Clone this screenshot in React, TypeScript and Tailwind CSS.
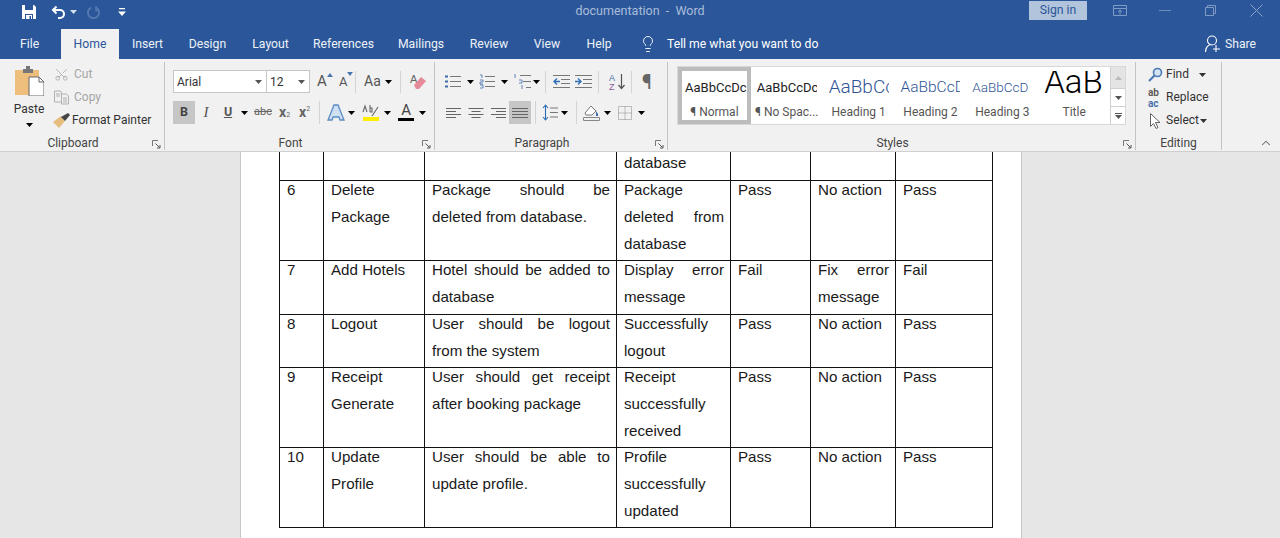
import type { ReactNode } from "react"
import { ChevronUp, Lightbulb, Scissors } from "lucide-react"

const tabs = [
  { name: "Insert", w: "w-[57px]" },
  { name: "Design", w: "w-[63px]" },
  { name: "Layout", w: "w-[63px]" },
  { name: "References", w: "w-[83px]" },
  { name: "Mailings", w: "w-[72px]" },
  { name: "Review", w: "w-[64px]" },
  { name: "View", w: "w-[52px]" },
  { name: "Help", w: "w-[52px]" },
]

const rows = [
  { no: "6", test: "Delete Package", expected: "Package should be deleted from database.", actual: "Package deleted from database", first: "Pass", action: "No action", last: "Pass", h: "h-[80px]" },
  { no: "7", test: "Add Hotels", expected: "Hotel should be added to database", actual: "Display error message", first: "Fail", action: "Fix error message", last: "Fail", h: "h-[54px]" },
  { no: "8", test: "Logout", expected: "User should be logout from the system", actual: "Successfully logout", first: "Pass", action: "No action", last: "Pass", h: "h-[53px]" },
  { no: "9", test: "Receipt Generate", expected: "User should get receipt after booking package", actual: "Receipt successfully received", first: "Pass", action: "No action", last: "Pass", h: "h-[80px]" },
  { no: "10", test: "Update Profile", expected: "User should be able to update profile.", actual: "Profile successfully updated", first: "Pass", action: "No action", last: "Pass", h: "h-[80px]" },
]

const styles = [
  { label: "¶ No Spac...", preview: "AaBbCcDc", cls: "text-[13px] text-[#222]" },
  { label: "Heading 1", preview: "AaBbCc", cls: "text-[19px] font-light text-[#2f5496]" },
  { label: "Heading 2", preview: "AaBbCcD", cls: "text-[15.500px] font-light text-[#2f5496]" },
  { label: "Heading 3", preview: "AaBbCcD", cls: "text-[13.500px] font-light text-[#2f5496]" },
]

function Caret({ className = "text-[#555]" }: { className?: string }) {
  return (
    <svg width="7" height="4" viewBox="0 0 7 4" className={className}>
      <path d="M0 0h7L3.5 4z" fill="currentColor" />
    </svg>
  )
}

function Launcher() {
  return (
    <svg width="9" height="9" viewBox="0 0 9 9" fill="none" stroke="#777">
      <path d="M.5 6V.5H6" />
      <path d="M3.5 3.5l4 4M8 5v3H5" stroke="#555" />
    </svg>
  )
}

function Lines({ kind }: { kind: "left" | "center" | "right" | "justify" }) {
  const ys = [1.5, 4.5, 7.5, 10.5]
  const short = { left: [15, 10, 15, 10], center: [15, 9, 15, 9], right: [15, 10, 15, 10], justify: [16, 16, 16, 16] }[kind]
  return (
    <svg width="16" height="12" viewBox="0 0 16 12" stroke="#666">
      {ys.map((y, i) => {
        const w = short[i]
        const x = kind === "left" ? 0 : kind === "center" ? (16 - w) / 2 : 16 - w
        return <path key={y} d={`M${x} ${y}h${w}`} />
      })}
    </svg>
  )
}

function Tool({ w, children, active }: { w: string; children: ReactNode; active?: boolean }) {
  return <div className={`flex h-[23px] items-center justify-center ${w} ${active ? "bg-[#c6c6c6]" : ""}`}>{children}</div>
}

function Group({ label, w, children, launcher = true }: { label: string; w: string; children: ReactNode; launcher?: boolean }) {
  return (
    <div className={`relative flex h-[88px] flex-col border-r border-[#c4c4c4] ${w}`}>
      <div className="min-h-0 flex-1">{children}</div>
      <div className={`flex h-[14px] items-center justify-center text-[12px] leading-none text-[#444] ${launcher ? "pr-[18px]" : ""}`}>{label}</div>
      {launcher && (
        <div className="absolute right-[3px] bottom-[1px] flex">
          <Launcher />
        </div>
      )}
    </div>
  )
}

function TitleBar() {
  return (
    <div className="grid h-[29px] grid-cols-[1fr_auto_1fr] items-start text-white">
      <div className="flex h-[24px] items-center pl-[21px]">
        <svg width="16" height="16" viewBox="0 0 16 16" fill="none">
          <path d="M1 1h12l2 2v12H1z" fill="white" />
          <path d="M4 1h8v5H4zM4 10h8v5H4z" fill="#2b579a" />
          <path d="M5 11h6v4H5z" fill="white" />
          <path d="M8.5 12h1.5v3H8.5z" fill="#2b579a" />
        </svg>
        <svg width="16" height="14" viewBox="0 0 16 14" fill="none" stroke="white" strokeWidth="2" className="ml-[14px]">
          <path d="M5.5 1.5L2 5l3.5 3.5" />
          <path d="M2.5 5h6.5a4 4 0 0 1 0 8H7" />
        </svg>
        <Caret className="ml-[3px] text-[#d5dfee]" />
        <svg width="15" height="15" viewBox="0 0 15 15" fill="none" stroke="#5377ae" strokeWidth="2" className="ml-[9px]">
          <path d="M5 2.600a5.600 5.600 0 1 0 5 0" />
          <path d="M10 1v4.500h3" strokeWidth="1.500" />
        </svg>
        <svg width="8" height="8" viewBox="0 0 8 8" className="ml-[17px]" fill="white">
          <path d="M1 0h6v1.300H1zM0 3.500h8L4 8z" />
        </svg>
      </div>
      <div className="pt-[2px] text-[12.500px] leading-[18px] whitespace-pre text-[#a9bcd9]">documentation  -  Word</div>
      <div className="flex h-[21px] items-center justify-end">
        <div className="flex h-[19px] w-[58px] items-center justify-center bg-[#b2c3dc] text-[12.200px] text-[#2b579a]">Sign in</div>
        <div className="ml-[26px] flex w-[14px] justify-center">
          <svg width="14" height="11" viewBox="0 0 14 11" fill="none" stroke="#7f9ac4">
            <path d="M.5.500h13v10H.5zM.5 3.500h13M7 9.500V5M5 7l2-2 2 2" />
          </svg>
        </div>
        <div className="ml-[32px] h-px w-[12px] bg-[#6e8dbb]" />
        <svg width="11" height="11" viewBox="0 0 11 11" fill="none" stroke="#7f9ac4" className="ml-[34px]">
          <path d="M.5 2.500h8v8h-8zM2.500 2.500v-2h8v8h-2" />
        </svg>
        <svg width="13" height="13" viewBox="0 0 13 13" fill="none" stroke="#8aa3c9" className="mr-[17px] ml-[34px]">
          <path d="M.5.500l12 12M12.500.500l-12 12" />
        </svg>
      </div>
    </div>
  )
}

function TabBar() {
  return (
    <div className="flex h-[30px] items-center text-[12.200px] text-[#eef2f8]">
      <div className="flex h-full w-[61px] items-center pl-[20px]">File</div>
      <div className="flex h-full w-[58px] items-center justify-center bg-[#f1f1f1] text-[#2b579a]">Home</div>
      {tabs.map((t) => (
        <div key={t.name} className={`flex h-full items-center justify-center ${t.w}`}>
          {t.name}
        </div>
      ))}
      <Lightbulb size={18} strokeWidth={1.200} className="ml-[14px] text-white" />
      <div className="ml-[10px] text-white">Tell me what you want to do</div>
      <div className="ml-auto mr-[24px] flex items-center">
        <svg width="16" height="18" viewBox="0 0 16 18" fill="none" stroke="white" strokeWidth="1.100">
          <circle cx="7" cy="5.500" r="4.500" />
          <path d="M.5 17c0-4 2.500-7 5-7.500M11 10v7M8 14h7" />
        </svg>
        <span className="ml-[4px]">Share</span>
      </div>
    </div>
  )
}

function Clipboard() {
  return (
    <Group label="Clipboard" w="w-[165px]">
      <div className="flex">
        <div className="flex w-[54px] flex-col items-center pt-[3px] pl-[4px]">
          <svg width="30" height="31" viewBox="0 0 30 31">
            <path d="M1 5h24v25H1z" fill="#eebf7c" />
            <path d="M9 4h3V1h4v3h3v4H9z" fill="#777" />
            <path d="M15 12h10l5 5v14H15z" fill="white" stroke="#666" />
            <path d="M25 12v5h5" fill="none" stroke="#666" />
          </svg>
          <div className="mt-[5px] text-[12px] leading-[16px] text-[#333]">Paste</div>
          <Caret className="mt-[6px]" />
        </div>
        <div className="flex flex-col pt-[1px] text-[12px] leading-[23px]">
          <div className="flex items-center text-[#a6a6a6]">
            <Scissors size={15} strokeWidth={1.300} className="-rotate-90" />
            <span className="ml-[5px]">Cut</span>
          </div>
          <div className="flex items-center text-[#a6a6a6]">
            <svg width="15" height="15" viewBox="0 0 15 15" fill="none" stroke="#b0b0b0">
              <path d="M.5 1h6l1 2v9H.5zM7.500 4h5l2 2v8h-7zM2 4h4M2 6h4M9 8h4M9 10h4M9 12h4" />
            </svg>
            <span className="ml-[5px]">Copy</span>
          </div>
          <div className="-ml-[1px] flex items-center text-[#333]">
            <svg width="17" height="15" viewBox="0 0 17 15">
              <path d="M0 9l8-6 4 5-6 7z" fill="#e6bd7e" />
              <path d="M8 4l7-4 2 2-5 6z" fill="#444" />
            </svg>
            <span className="ml-[2px]">Format Painter</span>
          </div>
        </div>
      </div>
    </Group>
  )
}

function Font() {
  return (
    <Group label="Font" w="w-[270px]">
      <div className="pl-[8px] pt-[8px]">
        <div className="flex h-[23px] items-center">
          <div className="flex h-[23px] w-[94px] items-center justify-between border border-[#c6c6c6] bg-white pt-[1px] pr-[4px] pl-[3px] text-[12px] text-[#333]">
            Arial
            <Caret />
          </div>
          <div className="flex h-[23px] w-[43px] items-center justify-between border border-l-0 border-[#c6c6c6] bg-white pt-[1px] pr-[4px] pl-[3px] text-[12px] text-[#333]">
            12
            <Caret />
          </div>
          <div className="relative ml-[7px] w-[16px] text-[15px] leading-none text-[#555]">
            A
            <svg width="6" height="4" viewBox="0 0 6 4" className="absolute -top-[1px] left-[10px] text-[#4a76b0]">
              <path d="M0 4l3-4 3 4z" fill="currentColor" />
            </svg>
          </div>
          <div className="relative ml-[6px] w-[14px] text-[13px] leading-none text-[#555]">
            A
            <svg width="6" height="4" viewBox="0 0 6 4" className="absolute -top-[3px] left-[8px] text-[#4a76b0]">
              <path d="M0 0h6L3 4z" fill="currentColor" />
            </svg>
          </div>
          <div className="mx-[2px] h-[22px] w-px bg-[#d4d4d4]" />
          <div className="ml-[6px] text-[14px] text-[#555]">Aa</div>
          <Caret className="ml-[4px]" />
          <div className="ml-[8px] h-[22px] w-px bg-[#d4d4d4]" />
          <svg width="16" height="17" viewBox="0 0 16 17" className="ml-[9px]">
            <text x="0" y="10" fontSize="11" fill="#666" fontFamily="Liberation Sans">A</text>
            <path d="M4 12l7-8 5 4-7 8H6z" fill="#e58a98" />
          </svg>
        </div>
        <div className="mt-[8px] flex h-[23px] items-center">
          <Tool w="w-[22px]" active>
            <span className="text-[12.500px] font-bold text-[#444]">B</span>
          </Tool>
          <Tool w="w-[22px]">
            <span className="font-['Liberation_Serif'] text-[15px] text-[#555] italic">I</span>
          </Tool>
          <Tool w="w-[22px]">
            <span className="text-[12.500px] font-bold text-[#555] underline">U</span>
          </Tool>
          <Caret className="mr-[6px] ml-[2px]" />
          <span className="w-[19px] text-[11px] text-[#666] line-through">abc</span>
          <span className="ml-[6px] text-[14px] font-bold text-[#666]">x</span>
          <span className="mt-[6px] text-[7px] text-[#666]">2</span>
          <span className="ml-[9px] text-[14px] font-bold text-[#666]">x</span>
          <span className="mb-[6px] text-[7px] text-[#666]">2</span>
          <div className="mr-[7px] ml-[9px] h-[23px] w-px bg-[#d4d4d4]" />
          <svg width="18" height="17" viewBox="0 0 18 17" fill="#cfe0f2" stroke="#5a8cc4" strokeWidth="1.300">
            <path d="M7 1h4l6 15h-4l-1-3H6l-1 3H1z" />
          </svg>
          <Caret className="mr-[7px] ml-[3px]" />
          <div className="flex w-[17px] flex-col items-center">
            <svg width="17" height="12" viewBox="0 0 17 12" fill="none" stroke="#666">
              <path d="M1 8l2-6 2 6M8 1v7M8 4h2v4H8M10 12l6-9" strokeWidth="1.100" />
            </svg>
            <div className="mt-[1px] h-[4px] w-[16px] bg-[#ffee00]" />
          </div>
          <Caret className="mr-[7px] ml-[5px]" />
          <div className="flex w-[16px] flex-col items-center">
            <span className="text-[15px] leading-[13px] text-[#444]">A</span>
            <div className="mt-[1px] h-[3px] w-[16px] bg-black" />
          </div>
          <Caret className="ml-[5px]" />
        </div>
      </div>
    </Group>
  )
}

function Paragraph() {
  return (
    <Group label="Paragraph" w="w-[233px]">
      <div className="pl-[8px] pt-[8px]">
        <div className="flex h-[23px] items-center pl-[2px]">
          <svg width="16" height="15" viewBox="0 0 16 15" stroke="#777">
            <path d="M5 2.500h11M5 7.500h11M5 12.500h11" />
            <path d="M0 2.500h3M0 7.500h3M0 12.500h3" stroke="#3f6ca8" strokeWidth="2" />
          </svg>
          <Caret className="mr-[5px] ml-[6px]" />
          <svg width="16" height="15" viewBox="0 0 16 15" stroke="#777">
            <path d="M6 2.500h10M6 7.500h10M6 12.500h10" />
            <path d="M1 1h2v3M1 6h3v2H1v2h3M1 11h3v3H1" stroke="#3f6ca8" fill="none" strokeWidth=".8" />
          </svg>
          <Caret className="mr-[6px] ml-[6px]" />
          <svg width="17" height="16" viewBox="0 0 17 16" stroke="#777">
            <path d="M6 1.500h11M9 7.500h8M12 13.500h5" />
            <path d="M1 0v4M5 6h3v3H5M8 11v4" stroke="#3f6ca8" fill="none" strokeWidth=".8" />
          </svg>
          <Caret className="ml-[2px]" />
          <div className="mx-[5px] h-[22px] w-px bg-[#d4d4d4]" />
          <svg width="17" height="13" viewBox="0 0 17 13" className="ml-[2px]" stroke="#777">
            <path d="M0 .500h17M8 4.500h9M8 8.500h9M0 12.500h17" />
            <path d="M7 6.500H1M4 3.500l-3 3 3 3" stroke="#2f6eb5" fill="none" strokeWidth="1.400" />
          </svg>
          <svg width="17" height="13" viewBox="0 0 17 13" className="ml-[5px]" stroke="#777">
            <path d="M0 .500h17M8 4.500h9M8 8.500h9M0 12.500h17" />
            <path d="M0 6.500h6M3 3.500l3 3-3 3" stroke="#2f6eb5" fill="none" strokeWidth="1.400" />
          </svg>
          <div className="mr-[10px] ml-[6px] h-[22px] w-px bg-[#d4d4d4]" />
          <svg width="18" height="17" viewBox="0 0 18 17" fill="none">
            <text x="0" y="8" fontSize="9" fill="#3f6ca8" fontFamily="Liberation Sans">A</text>
            <text x="0" y="16.500" fontSize="9" fill="#8a5a9e" fontFamily="Liberation Sans">Z</text>
            <path d="M12.500 1v14M9.500 12l3 3.500 3-3.500" stroke="#555" strokeWidth="1.200" />
          </svg>
          <div className="mr-[10px] ml-[4px] h-[22px] w-px bg-[#d4d4d4]" />
          <span className="text-[20px] leading-none text-[#666]">¶</span>
        </div>
        <div className="mt-[8px] flex h-[23px] items-center">
          <Tool w="w-[22px]"><Lines kind="left" /></Tool>
          <Tool w="w-[22px]"><Lines kind="center" /></Tool>
          <Tool w="w-[22px]"><Lines kind="right" /></Tool>
          <Tool w="w-[22px]" active><Lines kind="justify" /></Tool>
          <div className="mr-[6px] ml-[4px] h-[23px] w-px bg-[#d4d4d4]" />
          <svg width="16" height="17" viewBox="0 0 16 17" fill="none">
            <path d="M3.500 1.500v14M1 4l2.500-3L6 4M1 13l2.500 3L6 13" stroke="#2f6eb5" strokeWidth="1.100" />
            <path d="M8 4h8M8 8.500h8M8 13h8" stroke="#777" />
          </svg>
          <Caret className="mr-[8px] ml-[3px]" />
          <div className="mr-[6px] h-[23px] w-px bg-[#d4d4d4]" />
          <svg width="18" height="18" viewBox="0 0 18 18" fill="none">
            <path d="M2 9l6-7 5 5-4 4H3z" fill="white" stroke="#777" />
            <path d="M13 7l2 3v2h-2z" fill="#3f6ca8" />
            <path d="M.5 13.500h16v3H.5z" stroke="#888" />
          </svg>
          <Caret className="mr-[7px] ml-[3px]" />
          <svg width="14" height="14" viewBox="0 0 14 14" fill="none" stroke="#888" strokeDasharray="1 1">
            <path d="M.5.500h13v13H.5zM7 .5v13M.5 7h13" />
          </svg>
          <Caret className="ml-[6px]" />
        </div>
      </div>
    </Group>
  )
}

function Styles() {
  return (
    <Group label="Styles" w="w-[468px]">
      <div className="pl-[9px] pt-[4px]">
        <div className="flex h-[59px] w-[449px] border border-[#d8d8d8] bg-white">
          <div className="flex h-[57px] w-[73px] flex-col items-center overflow-hidden border-4 border-[#bcbcbc]">
            <div className="flex h-[30px] w-full items-center overflow-hidden pt-[3px] pl-[3px] text-[13px] whitespace-nowrap text-[#222]">AaBbCcDc</div>
            <div className="flex h-[19px] items-center pt-[2px] text-[12px] text-[#555]">¶ Normal</div>
          </div>
          {styles.map((s) => (
            <div key={s.label} className="flex h-[57px] w-[72px] flex-col items-center overflow-hidden">
              <div className={`flex h-[38px] w-[60px] items-center overflow-hidden pt-[3px] whitespace-nowrap ${s.cls}`}>{s.preview}</div>
              <div className="flex h-[14px] items-center text-[12px] whitespace-nowrap text-[#555]">{s.label}</div>
            </div>
          ))}
          <div className="flex h-[57px] w-[72px] flex-col items-center">
            <div className="mt-[4px] h-[24px] w-[60px] overflow-hidden text-[33px] leading-[22px] font-light whitespace-nowrap text-black">AaB</div>
            <div className="mt-[10px] flex h-[14px] items-center text-[12px] text-[#555]">Title</div>
          </div>
          <div className="flex w-[15px] flex-col border-l border-[#d0d0d0]">
            <div className="flex h-[21px] items-center justify-center bg-[#e4e4e4]">
              <Caret className="rotate-180 text-[#bbb]" />
            </div>
            <div className="flex h-[19px] items-center justify-center border-y border-[#d0d0d0]">
              <Caret />
            </div>
            <div className="flex flex-1 flex-col items-center justify-center">
              <div className="mb-[1px] h-px w-[7px] bg-[#555]" />
              <Caret />
            </div>
          </div>
        </div>
      </div>
    </Group>
  )
}

function Editing() {
  return (
    <Group label="Editing" w="w-[86px]" launcher={false}>
      <div className="flex flex-col pt-[1px] pl-[12px] text-[12px] leading-[23px] text-[#333]">
        <div className="flex items-center">
          <svg width="15" height="15" viewBox="0 0 15 15" fill="none">
            <circle cx="9.500" cy="5.500" r="4" stroke="#4a7ab5" strokeWidth="1.600" fill="#d5e3f3" />
            <path d="M6.500 8.500L1 14" stroke="#4a7ab5" strokeWidth="2.200" />
          </svg>
          <span className="ml-[3px]">Find</span>
          <Caret className="ml-[10px]" />
        </div>
        <div className="flex items-center">
          <div className="flex w-[18px] flex-col text-[10px] leading-[11px] font-semibold">
            <span className="text-[#555]">ab</span>
            <span className="text-[#3f6ca8]">ac</span>
          </div>
          <span>Replace</span>
        </div>
        <div className="flex items-center">
          <svg width="15" height="16" viewBox="0 0 15 16" fill="white" stroke="#666" className="ml-[1px]">
            <path d="M1.500.500v13l3-3 2.500 5 2-1-2.500-5h4.500z" />
          </svg>
          <span className="ml-[2px]">Select</span>
          <Caret className="ml-[1px]" />
        </div>
      </div>
    </Group>
  )
}

function Cell({ text, h }: { text: string; h?: string }) {
  return (
    <td className={`border border-[#111] pr-[6px] pl-[7px] align-top ${h ?? ""}`}>
      <div className="-mt-[5px] text-justify">{text}</div>
    </td>
  )
}

function DocTable() {
  return (
    <table className="table-fixed border-collapse font-['Liberation_Sans'] text-[15.150px] leading-[27px] text-[#1a1a1a]">
      <colgroup>
        <col className="w-[44px]" />
        <col className="w-[101px]" />
        <col className="w-[192px]" />
        <col className="w-[114px]" />
        <col className="w-[80px]" />
        <col className="w-[85px]" />
        <col className="w-[97px]" />
      </colgroup>
      <tbody>
        <tr>
          <td className="h-[28px] border border-t-0 border-[#111]" />
          <td className="border border-t-0 border-[#111]" />
          <td className="border border-t-0 border-[#111]" />
          <td className="border border-t-0 border-[#111] px-[7px] align-top">
            <div className="-mt-[3px]">database</div>
          </td>
          <td className="border border-t-0 border-[#111]" />
          <td className="border border-t-0 border-[#111]" />
          <td className="border border-t-0 border-[#111]" />
        </tr>
        {rows.map((r) => (
          <tr key={r.no}>
            <Cell text={r.no} h={r.h} />
            <td className="border border-[#111] px-[7px] align-top">
              <div className="-mt-[5px]">{r.test}</div>
            </td>
            <Cell text={r.expected} />
            <Cell text={r.actual} />
            <Cell text={r.first} />
            <Cell text={r.action} />
            <Cell text={r.last} />
          </tr>
        ))}
      </tbody>
    </table>
  )
}

export default function App() {
  return (
    <div className="flex h-[538px] w-[1280px] flex-col overflow-hidden bg-[#e6e6e6] font-['Roboto',sans-serif]">
      <header className="bg-[#2b579a]">
        <TitleBar />
        <TabBar />
      </header>
      <div className="flex h-[93px] border-b border-[#cfcfcf] bg-[#f1f1f1] pt-[3px]">
        <Clipboard />
        <Font />
        <Paragraph />
        <Styles />
        <Editing />
        <div className="flex flex-1 items-end justify-end pr-[7px] pb-[1px]">
          <ChevronUp size={14} strokeWidth={1.800} className="text-[#666]" />
        </div>
      </div>
      <main className="min-h-0 flex-1 pl-[240px]">
        <div className="h-full w-[782px] border-x border-[#c6c6c6] bg-white pl-[38px]">
          <DocTable />
        </div>
      </main>
    </div>
  )
}
